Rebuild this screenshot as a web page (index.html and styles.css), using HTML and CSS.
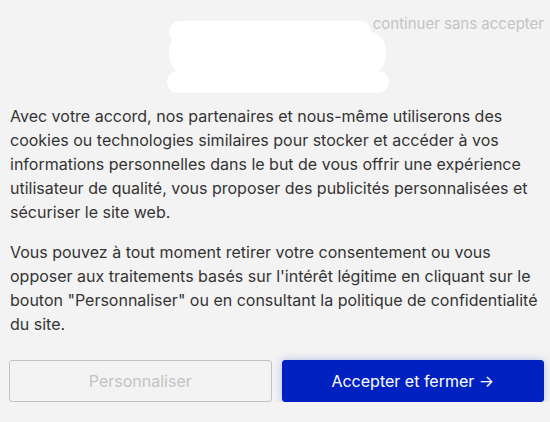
FILE: index.html
```html
<!DOCTYPE html>
<html lang="fr">
<head>
<meta charset="utf-8">
<link rel="stylesheet" href="styles.css">
</head>
<body>
<div class="banner">
  <header class="head">
    <svg class="logo" width="222" height="72" viewBox="0 0 222 72" aria-hidden="true">
      <rect x="2" y="0" width="202" height="22" rx="11" fill="#fff"/>
      <rect x="2" y="10" width="217" height="44" rx="20" fill="#fff"/>
      <rect x="0" y="50" width="222" height="22" rx="11" fill="#fff"/>
    </svg>
    <a class="skip" href="#">continuer sans accepter</a>
  </header>
  <div class="text">
    <p>Avec votre accord, nos partenaires et nous-même utiliserons des cookies ou technologies similaires pour stocker et accéder à vos informations personnelles dans le but de vous offrir une expérience utilisateur de qualité, vous proposer des publicités personnalisées et sécuriser le site web.</p>
    <p>Vous pouvez à tout moment retirer votre consentement ou vous opposer aux traitements basés sur l'intérêt légitime en cliquant sur le bouton "Personnaliser" ou en consultant la politique de confidentialité du site.</p>
  </div>
  <div class="actions">
    <button class="btn btn-ghost">Personnaliser</button>
    <button class="btn btn-primary">Accepter et fermer →</button>
  </div>
</div>
</body>
</html>
```
FILE: styles.css
```css
html, body {
  margin: 0;
  padding: 0;
  background: #f3f3f3;
}
body {
  font-family: Inter, "Noto Sans", sans-serif;
  color: #333;
}
.banner {
  padding: 21px 6px 0 10px;
}
.head {
  position: relative;
  display: flex;
  justify-content: center;
  padding-left: 2px;
}
.logo {
  display: block;
}
.skip {
  position: absolute;
  top: -7px;
  right: 0;
  font-size: 15px;
  line-height: 20px;
  color: #c3c3c3;
  text-decoration: none;
}
.text {
  margin-top: 11px;
  font-size: 16px;
  line-height: 24px;
}
.text p {
  margin: 0 0 16px;
}
.text p:last-child {
  margin-bottom: 0;
}
.actions {
  display: flex;
  gap: 10px;
  margin-top: 24px;
  margin-left: -1px;
}
.btn {
  flex: 1;
  height: 42px;
  border-radius: 3px;
  font-family: Inter, "Noto Sans", sans-serif;
  font-size: 16px;
  cursor: pointer;
}
.btn-ghost {
  background: #f3f3f3;
  border: 1px solid #c2c2c2;
  color: #c3c3c3;
}
.btn-primary {
  background: #0021c2;
  border: 1px solid #0021c2;
  color: #fff;
  box-shadow: 0 0 8px rgba(0, 33, 194, 0.25);
}
```
